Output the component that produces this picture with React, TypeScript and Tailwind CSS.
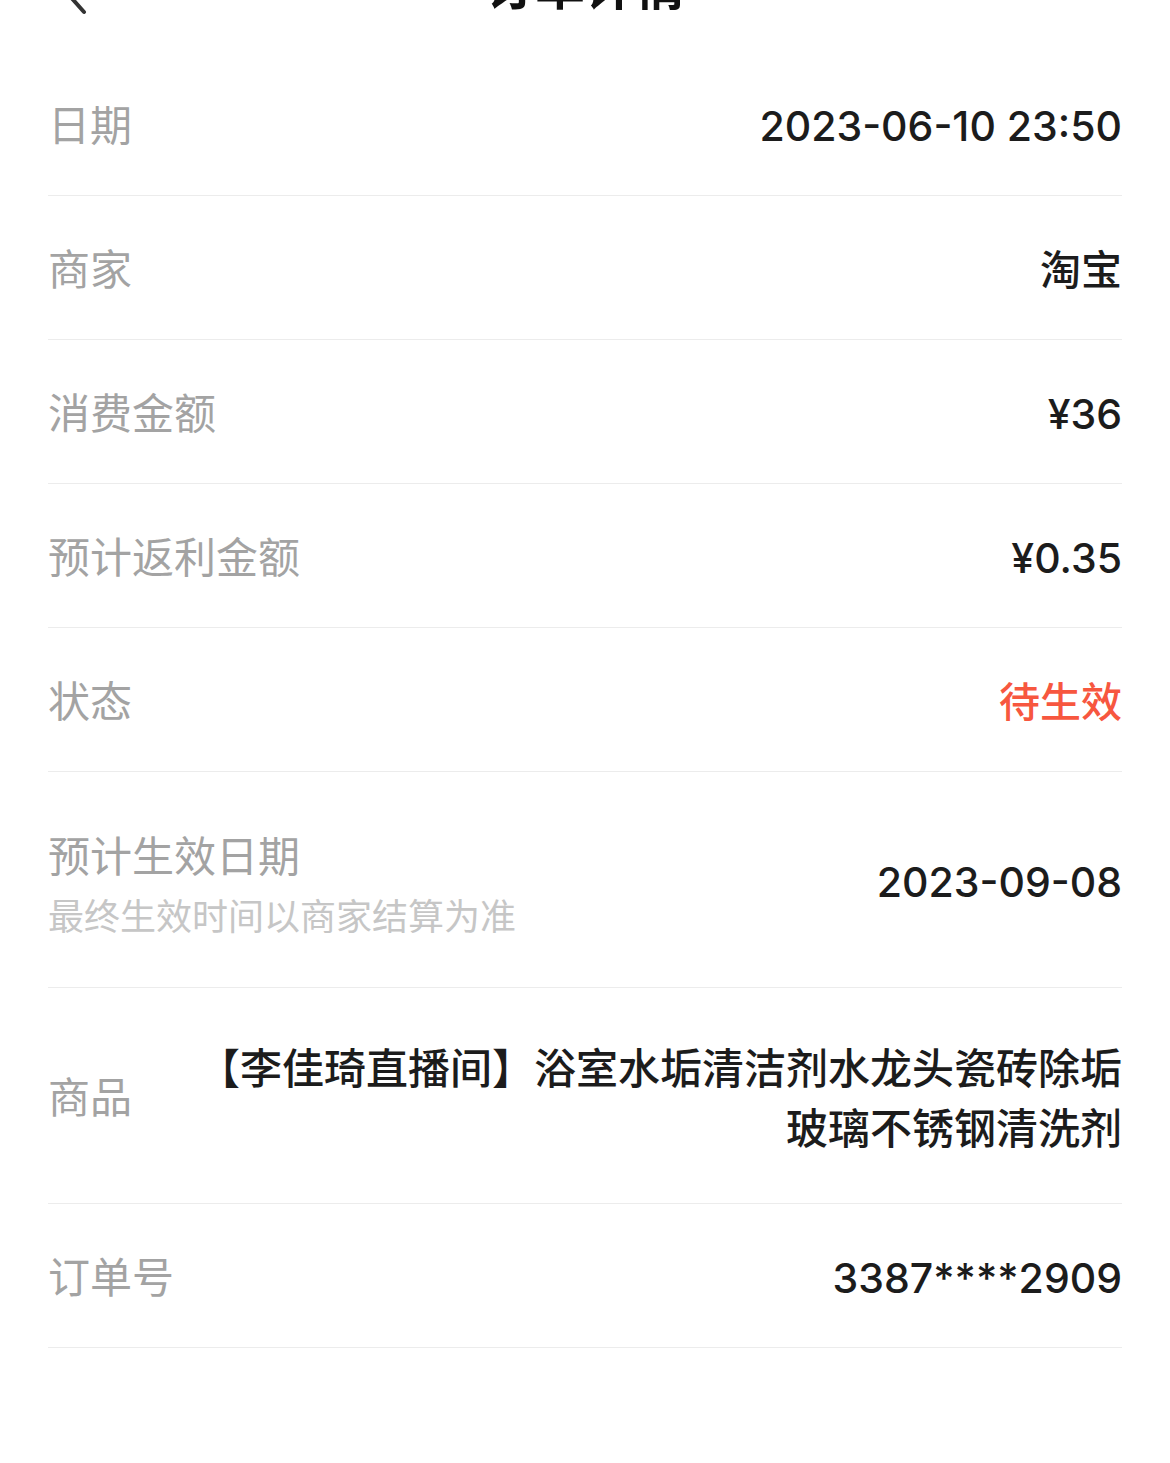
import React from "react";

type Row = {
  label: string;
  value: string;
  sub?: string;
  tone?: "red";
};

const rows: Row[] = [
  { label: "日期", value: "2023-06-10 23:50" },
  { label: "商家", value: "淘宝" },
  { label: "消费金额", value: "¥36" },
  { label: "预计返利金额", value: "¥0.35" },
  { label: "状态", value: "待生效", tone: "red" },
  { label: "预计生效日期", value: "2023-09-08", sub: "最终生效时间以商家结算为准" },
];

const font = { fontFamily: '"Liberation Sans", "Noto Sans CJK SC", sans-serif' };
const valueFont = { fontFamily: 'Inter, "Noto Sans CJK SC", sans-serif' };

export default function App() {
  return (
    <div className="min-h-screen bg-white" style={font}>
      {/* Header, scrolled partly off screen */}
      <div className="h-[52px] overflow-hidden">
        <div className="relative -mt-[40px] flex h-[56px] items-center justify-center">
          <svg
            className="absolute left-[60px] top-[12px] h-[44px] w-[30px] text-[#333]"
            viewBox="0 0 30 44"
            fill="none"
            stroke="currentColor"
            strokeWidth="4"
            strokeLinecap="round"
            strokeLinejoin="round"
          >
            <path d="M24 4 L8 22 L24 40" />
          </svg>
          <h1 className="text-[50px] font-bold text-[#111]">订单详情</h1>
        </div>
      </div>

      <div className="px-[48px]">
        {rows.map((row) => (
          <div
            key={row.label}
            className={`flex items-center justify-between border-b border-[#ececec] ${
              row.sub ? "h-[216px] pt-[16px]" : "h-[144px] pt-[6px]"
            }`}
          >
            <div>
              <p className="text-[42px] leading-[60px] text-[#a3a3a3]">{row.label}</p>
              {row.sub && (
                <p className="text-[36px] leading-[60px] text-[#c6c6c6]">{row.sub}</p>
              )}
            </div>
            <p
              style={valueFont}
              className={`text-[41px] font-medium ${
                row.tone === "red" ? "text-[#f7573f]" : "text-[#1c1c1c]"
              } ${row.sub ? "mt-[-10px]" : ""}`}
            >
              {row.value}
            </p>
          </div>
        ))}

        {/* Product */}
        <div className="flex h-[216px] items-center border-b border-[#ececec] pt-[6px]">
          <p className="w-[84px] shrink-0 text-[42px] text-[#a3a3a3]">商品</p>
          <p
            style={valueFont}
            className="ml-[60px] flex-1 text-right text-[42px] font-medium leading-[60px] text-[#1c1c1c]"
          >
            【李佳琦直播间】浴室水垢清洁剂水龙头瓷砖除垢玻璃不锈钢清洗剂
          </p>
        </div>

        <div className="flex h-[144px] items-center justify-between border-b border-[#ececec] pt-[6px]">
          <p className="text-[42px] text-[#a3a3a3]">订单号</p>
          <p style={valueFont} className="text-[41px] font-medium text-[#1c1c1c]">
            3387****2909
          </p>
        </div>
      </div>
    </div>
  );
}
